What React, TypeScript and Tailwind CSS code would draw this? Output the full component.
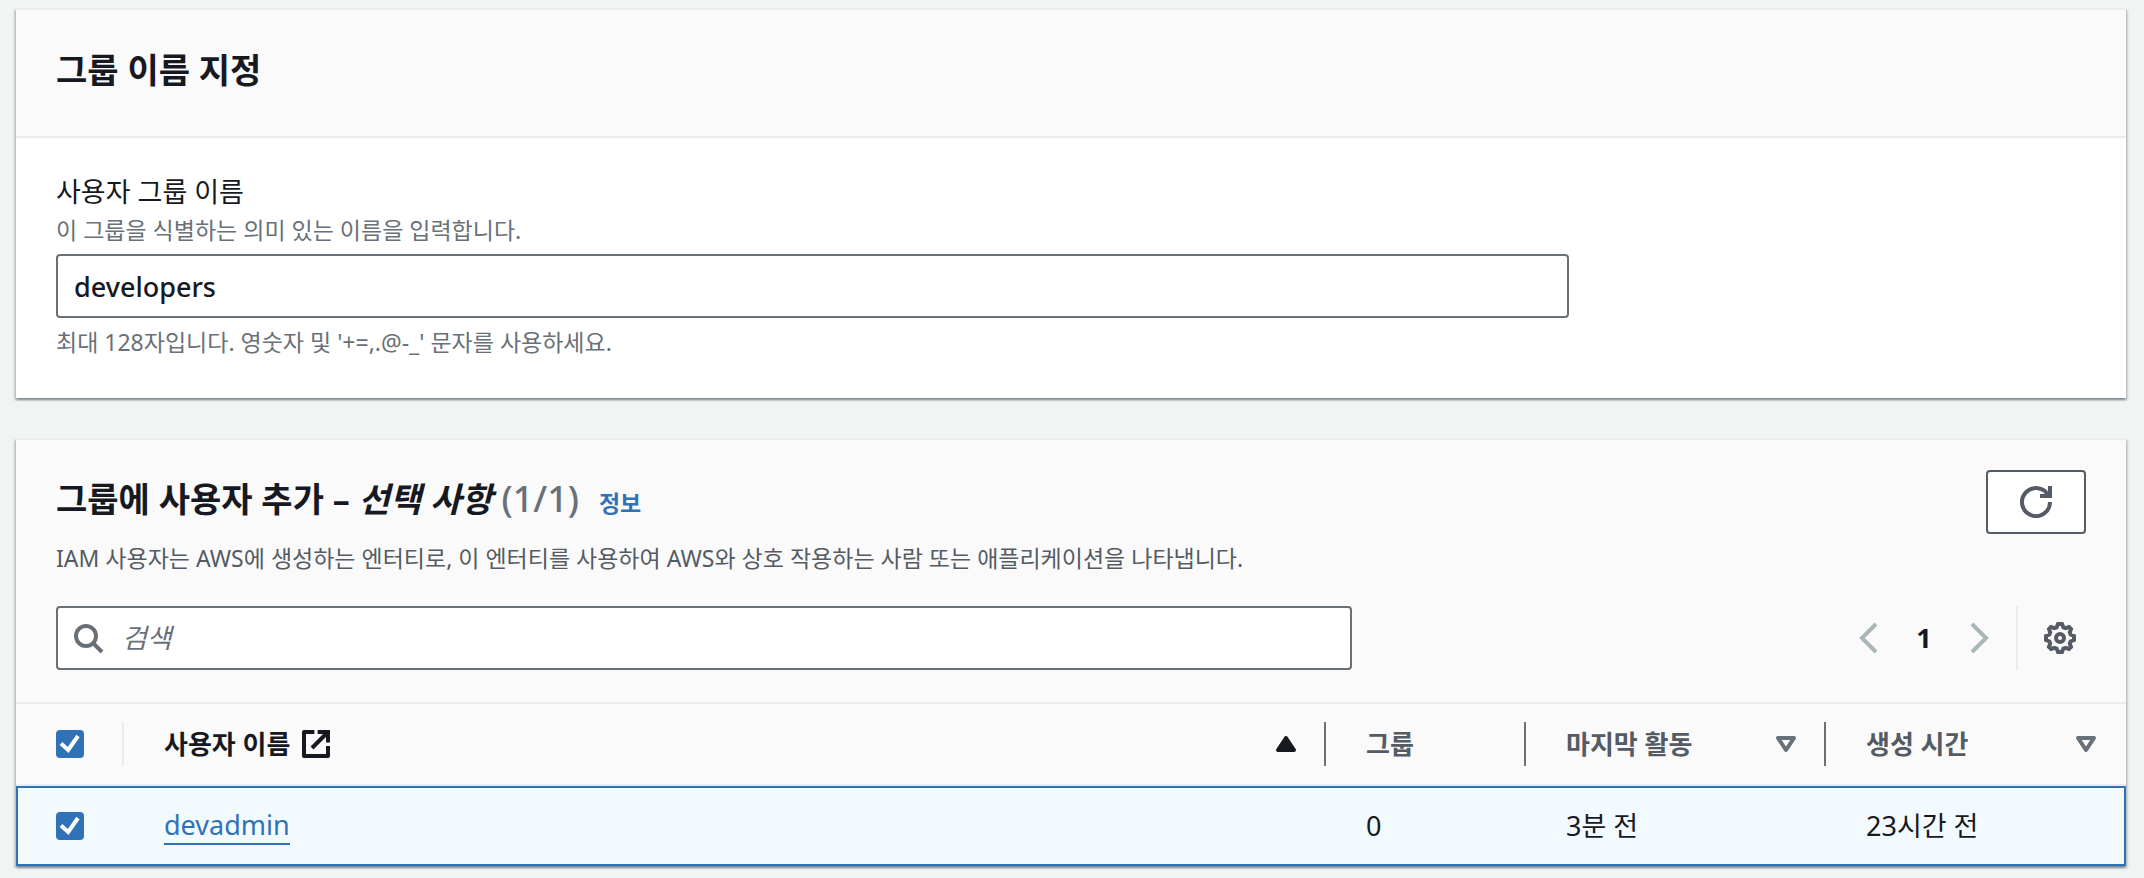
import React, { useState } from 'react';
import clsx from 'clsx';

interface User {
  name: string;
  groups: number;
  lastActivity: string;
  created: string;
}

const users: User[] = [
  { name: 'devadmin', groups: 0, lastActivity: '3분 전', created: '23시간 전' },
];

interface IconProps {
  className?: string;
  children: React.ReactNode;
}

function Icon({ className, children }: IconProps) {
  return (
    <svg
      viewBox="0 0 16 16"
      className={clsx('h-8 w-8 shrink-0 fill-none stroke-current stroke-2', className)}
      aria-hidden="true"
    >
      {children}
    </svg>
  );
}

interface CheckboxProps {
  label: string;
  checked: boolean;
  onChange: (checked: boolean) => void;
}

function Checkbox({ label, checked, onChange }: CheckboxProps) {
  return (
    <label className="grid h-7 w-7 shrink-0">
      <input
        type="checkbox"
        aria-label={label}
        checked={checked}
        onChange={(e) => onChange(e.target.checked)}
        className="col-start-1 row-start-1 h-7 w-7 appearance-none rounded-sm border-2 border-[#687078] bg-white checked:border-[#2f72b8] checked:bg-[#2f72b8]"
      />
      {checked && (
        <svg
          viewBox="0 0 28 28"
          className="pointer-events-none col-start-1 row-start-1 h-7 w-7 fill-none stroke-white stroke-4"
          aria-hidden="true"
        >
          <path d="M5 13.5l7.2 6.5L22 6" />
        </svg>
      )}
    </label>
  );
}

interface ColumnHeaderProps {
  title: React.ReactNode;
  sort?: 'asc' | 'none';
  last?: boolean;
}

function ColumnHeader({ title, sort, last }: ColumnHeaderProps) {
  const active = sort === 'asc';
  return (
    <th scope="col" className="border-b-2 border-[#eaeded] p-0 text-left">
      <div className="flex h-20 items-center">
        <button
          type="button"
          className={clsx(
            'flex flex-1 items-center justify-between pl-10 text-[26px] leading-9 font-bold',
            active ? 'text-[#16191f]' : 'text-[#545b64]',
            last ? 'pr-6' : 'pr-[22px]'
          )}
        >
          <span className="flex items-center gap-2.5">{title}</span>
          {sort && (
            <Icon className={active ? 'text-[#16191f]' : 'text-[#687078]'}>
              {active ? (
                <path d="M4 11h8L8 5z" fill="currentColor" strokeLinejoin="round" />
              ) : (
                <path d="M4 5h8l-4 6z" strokeLinejoin="round" />
              )}
            </Icon>
          )}
        </button>
        {!last && <span className="h-11 w-0.5 bg-[#687078]" />}
      </div>
    </th>
  );
}

export default function App() {
  const [groupName, setGroupName] = useState('developers');
  const [query, setQuery] = useState('');
  const [selected, setSelected] = useState<string[]>(['devadmin']);

  const visible = users.filter((user) => user.name.includes(query));
  const allSelected = selected.length === users.length;

  const toggle = (name: string, checked: boolean) => {
    setSelected(checked ? [...selected, name] : selected.filter((n) => n !== name));
  };

  return (
    <main className="flex min-h-screen flex-col gap-10 bg-[#f2f3f3] pt-2 pr-[18px] pb-3 pl-4 font-['Noto_Sans','Noto_Sans_CJK_KR',sans-serif] text-[27px] leading-9 text-[#16191f]">
      <section className="border-t-2 border-[#eaeded] bg-white shadow-[0_2px_2px_0_rgba(0,28,36,0.3),2px_2px_2px_0_rgba(0,28,36,0.15),-2px_2px_2px_0_rgba(0,28,36,0.15)]">
        <header className="border-b-2 border-[#eaeded] bg-[#fafafa] px-10 pt-[38px] pb-11">
          <h2 className="text-[34px] leading-11 font-bold">그룹 이름 지정</h2>
        </header>
        <div className="grid grid-cols-12 gap-10 px-10 pt-9 pb-[38px]">
          <div className="col-span-9 flex flex-col">
            <label htmlFor="group-name">사용자 그룹 이름</label>
            <p id="group-name-description" className="mt-0.5 text-[23px] text-[#687078]">
              이 그룹을 식별하는 의미 있는 이름을 입력합니다.
            </p>
            <input
              id="group-name"
              type="text"
              value={groupName}
              onChange={(e) => setGroupName(e.target.value)}
              aria-describedby="group-name-description group-name-constraint"
              className="my-1.5 h-16 w-full rounded-sm border-2 border-[#687078] bg-white px-4 font-medium outline-none"
            />
            <p id="group-name-constraint" className="text-[23px] text-[#687078]">
              최대 128자입니다. 영숫자 및 '+=,.@-_' 문자를 사용하세요.
            </p>
          </div>
        </div>
      </section>

      <section className="border-t-2 border-[#eaeded] bg-[#fafafa] shadow-[0_2px_2px_0_rgba(0,28,36,0.3),2px_2px_2px_0_rgba(0,28,36,0.15),-2px_2px_2px_0_rgba(0,28,36,0.15)]">
        <header className="px-10 pt-[30px] pb-8">
          <div className="flex items-start justify-between">
            <div>
              <div className="flex items-baseline gap-5">
                <h2 className="text-[34px] leading-[58px] font-bold">
                  그룹에 사용자 추가 – <em>선택 사항</em>{' '}
                  <span className="text-[36px] font-medium text-[#687078]">
                    ({selected.length}/{users.length})
                  </span>
                </h2>
                <a href="#info" className="text-[23px] font-bold text-[#2f72b8]">
                  정보
                </a>
              </div>
              <p className="mt-3 text-[23px] text-[#545b64]">
                IAM 사용자는 AWS에 생성하는 엔터티로, 이 엔터티를 사용하여 AWS와 상호 작용하는 사람 또는
                애플리케이션을 나타냅니다.
              </p>
            </div>
            <button
              type="button"
              aria-label="새로 고침"
              className="flex h-16 w-[100px] shrink-0 items-center justify-center rounded-sm border-2 border-[#545b64] bg-white text-[#545b64]"
            >
              <Icon>
                <path d="M15 0v5h-5" />
                <path d="M15 8a7 7 0 1 1-.7-3" />
              </Icon>
            </button>
          </div>

          <div className="mt-[30px] flex items-center justify-between">
            <label className="flex h-16 w-full max-w-[1296px] items-center gap-[18px] rounded-sm border-2 border-[#687078] bg-white px-3.5">
              <Icon className="text-[#687078]">
                <circle cx="7" cy="7" r="5" />
                <path d="M15 15l-4.5-4.5" />
              </Icon>
              <input
                type="search"
                aria-label="사용자 검색"
                placeholder="검색"
                value={query}
                onChange={(e) => setQuery(e.target.value)}
                className="min-w-0 flex-1 outline-none placeholder:text-[#687078] placeholder:italic"
              />
            </label>
            <div className="flex items-center pr-2.5">
              <button type="button" aria-label="이전 페이지" className="text-[#aab7b8]">
                <Icon>
                  <path d="M12 1L5 8l7 7" />
                </Icon>
              </button>
              <button type="button" aria-current="page" className="w-20 font-bold">
                1
              </button>
              <button type="button" aria-label="다음 페이지" className="text-[#aab7b8]">
                <Icon>
                  <path d="M4 1l7 7-7 7" />
                </Icon>
              </button>
              <span className="mr-[26px] ml-5 h-16 w-0.5 bg-[#eaeded]" />
              <button type="button" aria-label="기본 설정" className="text-[#545b64]">
                <Icon>
                  <path d="M7 1h2l.7 1.7 1.1.4 1.7-.6 1 1-.6 1.7.4 1.1L15 7v2l-1.7.7-.4 1.1.6 1.7-1 1-1.7-.6-1.1.4L9 15H7l-.7-1.7-1.1-.4-1.7.6-1-1 .6-1.7-.4-1.1L1 9V7l1.7-.7.4-1.1-.6-1.7 1-1 1.7.6 1.1-.4z" />
                  <circle cx="8" cy="8" r="2" />
                </Icon>
              </button>
            </div>
          </div>
        </header>

        <table className="w-full table-fixed border-separate border-spacing-0 border-t-2 border-[#eaeded]">
          <colgroup>
            <col className="w-[108px]" />
            <col />
            <col className="w-[200px]" />
            <col className="w-[300px]" />
            <col className="w-[300px]" />
          </colgroup>
          <thead>
            <tr>
              <th scope="col" className="border-b-2 border-[#eaeded] p-0">
                <div className="flex h-20 items-center justify-between pl-10">
                  <Checkbox
                    label="모두 선택"
                    checked={allSelected}
                    onChange={(checked) => setSelected(checked ? users.map((u) => u.name) : [])}
                  />
                  <span className="h-11 w-0.5 bg-[#eaeded]" />
                </div>
              </th>
              <ColumnHeader
                sort="asc"
                title={
                  <>
                    사용자 이름
                    <Icon>
                      <path d="M14 9v5H2V2h5.2" strokeLinejoin="round" />
                      <path d="M8.8 2H14v5.2" />
                      <path d="M6 10l8-8" />
                    </Icon>
                  </>
                }
              />
              <ColumnHeader title="그룹" />
              <ColumnHeader title="마지막 활동" sort="none" />
              <ColumnHeader title="생성 시간" sort="none" last />
            </tr>
          </thead>
          <tbody>
            {visible.map((user) => {
              const checked = selected.includes(user.name);
              const cell = clsx(
                'h-20 border-y-2 py-0',
                checked ? 'border-[#2f72b8] bg-[#f2fafd]' : 'border-[#eaeded] bg-white'
              );
              return (
                <tr key={user.name}>
                  <td className={clsx(cell, 'border-l-2 pr-0 pl-[38px]')}>
                    <Checkbox
                      label={`${user.name} 선택`}
                      checked={checked}
                      onChange={(value) => toggle(user.name, value)}
                    />
                  </td>
                  <td className={clsx(cell, 'px-10')}>
                    <a href={`#${user.name}`} className="inline-block border-b-2 border-[#2f72b8] text-[#2f72b8]">
                      {user.name}
                    </a>
                  </td>
                  <td className={clsx(cell, 'pl-10')}>{user.groups}</td>
                  <td className={clsx(cell, 'pl-10')}>{user.lastActivity}</td>
                  <td className={clsx(cell, 'border-r-2 pl-10')}>{user.created}</td>
                </tr>
              );
            })}
          </tbody>
        </table>
      </section>
    </main>
  );
}
